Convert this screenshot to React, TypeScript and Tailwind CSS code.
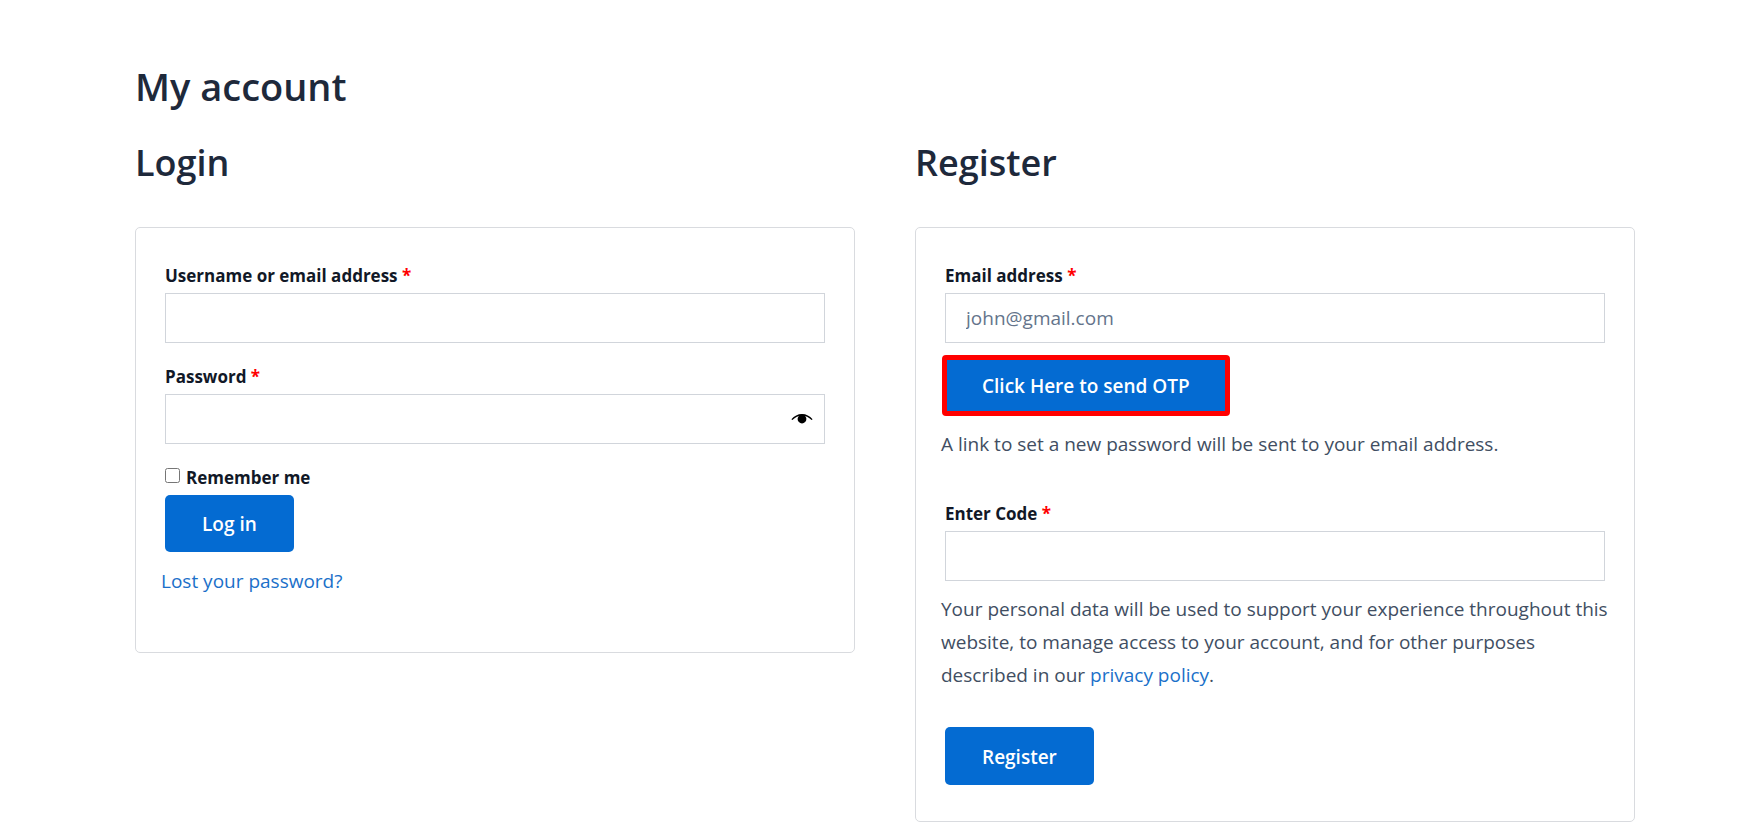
import { useState } from 'react';
import type { InputHTMLAttributes, ReactNode } from 'react';

const buttonClass =
  'block rounded-[5px] bg-[#046bd2] px-[37px] pt-0.5 text-[19px] font-semibold text-white';

type FieldProps = InputHTMLAttributes<HTMLInputElement> & {
  id: string;
  label: string;
  children?: ReactNode;
};

function Field({ id, label, children, ...inputProps }: FieldProps) {
  return (
    <div className="flex flex-col">
      <label htmlFor={id} className="py-px text-[17px] leading-[33px] font-bold text-[#111827]">
        {label} <span className="text-[#ff0000]">*</span>
      </label>
      <div className="relative">
        <input
          id={id}
          className="block h-[50px] w-full border border-[#d1d5db] bg-white px-5 text-[19px] text-[#414e62] outline-none placeholder:text-[#64748b] focus:border-[#046bd2]"
          {...inputProps}
        />
        {children}
      </div>
    </div>
  );
}

function EyeIcon() {
  return (
    <svg width="22" height="12" viewBox="0 0 22 12" fill="none" aria-hidden="true">
      <path
        d="M.4 6.2C3.200 3 6.800 1 11 1s7.800 2 10.600 5.200l-1 .8C17.800 4.300 14.600 2.800 11 2.800S4.200 4.300 1.400 7Z"
        fill="#000"
      />
      <circle cx="11" cy="6" r="4.400" fill="#000" />
    </svg>
  );
}

function LoginForm() {
  const [visible, setVisible] = useState(false);
  return (
    <form
      className="rounded-[5px] border border-[#d9dbdf] px-[29px] pt-[30px] pb-[54px]"
      onSubmit={(e) => e.preventDefault()}
    >
      <div className="flex flex-col gap-4">
        <Field id="username" label="Username or email address" type="text" />
        <Field id="password" label="Password" type={visible ? 'text' : 'password'}>
          <button
            type="button"
            aria-label="Show password"
            onClick={() => setVisible(!visible)}
            className="absolute inset-y-0 right-3 flex items-center"
          >
            <EyeIcon />
          </button>
        </Field>
        <label className="flex items-center gap-1.5 self-start py-px text-[17px] leading-[33px] font-bold text-[#111827]">
          <input type="checkbox" className="mb-1 size-[15px]" />
          Remember me
        </label>
      </div>
      <button type="submit" className={`${buttonClass} h-[57px]`}>
        Log in
      </button>
      <p className="-mx-1 mt-[13px] text-[19px] leading-[33px]">
        <a href="#lost-password" className="text-[#1b70c9]">
          Lost your password?
        </a>
      </p>
    </form>
  );
}

function RegisterForm() {
  return (
    <form
      className="rounded-[5px] border border-[#d9dbdf] px-[29px] pt-[30px] pb-[36px]"
      onSubmit={(e) => e.preventDefault()}
    >
      <Field id="email" label="Email address" type="email" placeholder="john@gmail.com" />
      <button
        type="button"
        className="-mx-[3px] mt-3 block h-[61px] rounded-[4px] border-[5px] border-[#ff0000] bg-[#046bd2] px-[35px] pt-0.5 text-[19px] font-semibold text-white"
      >
        Click Here to send OTP
      </button>
      <p className="-mx-1 mt-3 mb-[35px] text-[19px] leading-[33px]">
        A link to set a new password will be sent to your email address.
      </p>
      <Field id="code" label="Enter Code" type="text" />
      <p className="-mx-1 mt-3 mb-[35px] text-[19px] leading-[33px]">
        Your personal data will be used to support your experience throughout this website, to
        manage access to your account, and for other purposes described in our{' '}
        <a href="#privacy" className="text-[#1b70c9]">
          privacy policy
        </a>
        .
      </p>
      <button type="submit" className={`${buttonClass} h-[58px]`}>
        Register
      </button>
    </form>
  );
}

export default function App() {
  return (
    <main className="min-h-screen bg-white pt-[60px] pr-[118px] pb-[11px] pl-[135px] font-['Open_Sans',sans-serif] text-[#414e62]">
      <h1 className="text-[38px] leading-[52px] font-semibold text-[#1e293b]">My account</h1>
      <div className="mt-[25px] grid grid-cols-2 items-start gap-[60px]">
        <section>
          <h2 className="mb-[38px] text-[36px] leading-[52px] font-semibold text-[#1e293b]">Login</h2>
          <LoginForm />
        </section>
        <section>
          <h2 className="mb-[38px] text-[36px] leading-[52px] font-semibold text-[#1e293b]">Register</h2>
          <RegisterForm />
        </section>
      </div>
    </main>
  );
}
